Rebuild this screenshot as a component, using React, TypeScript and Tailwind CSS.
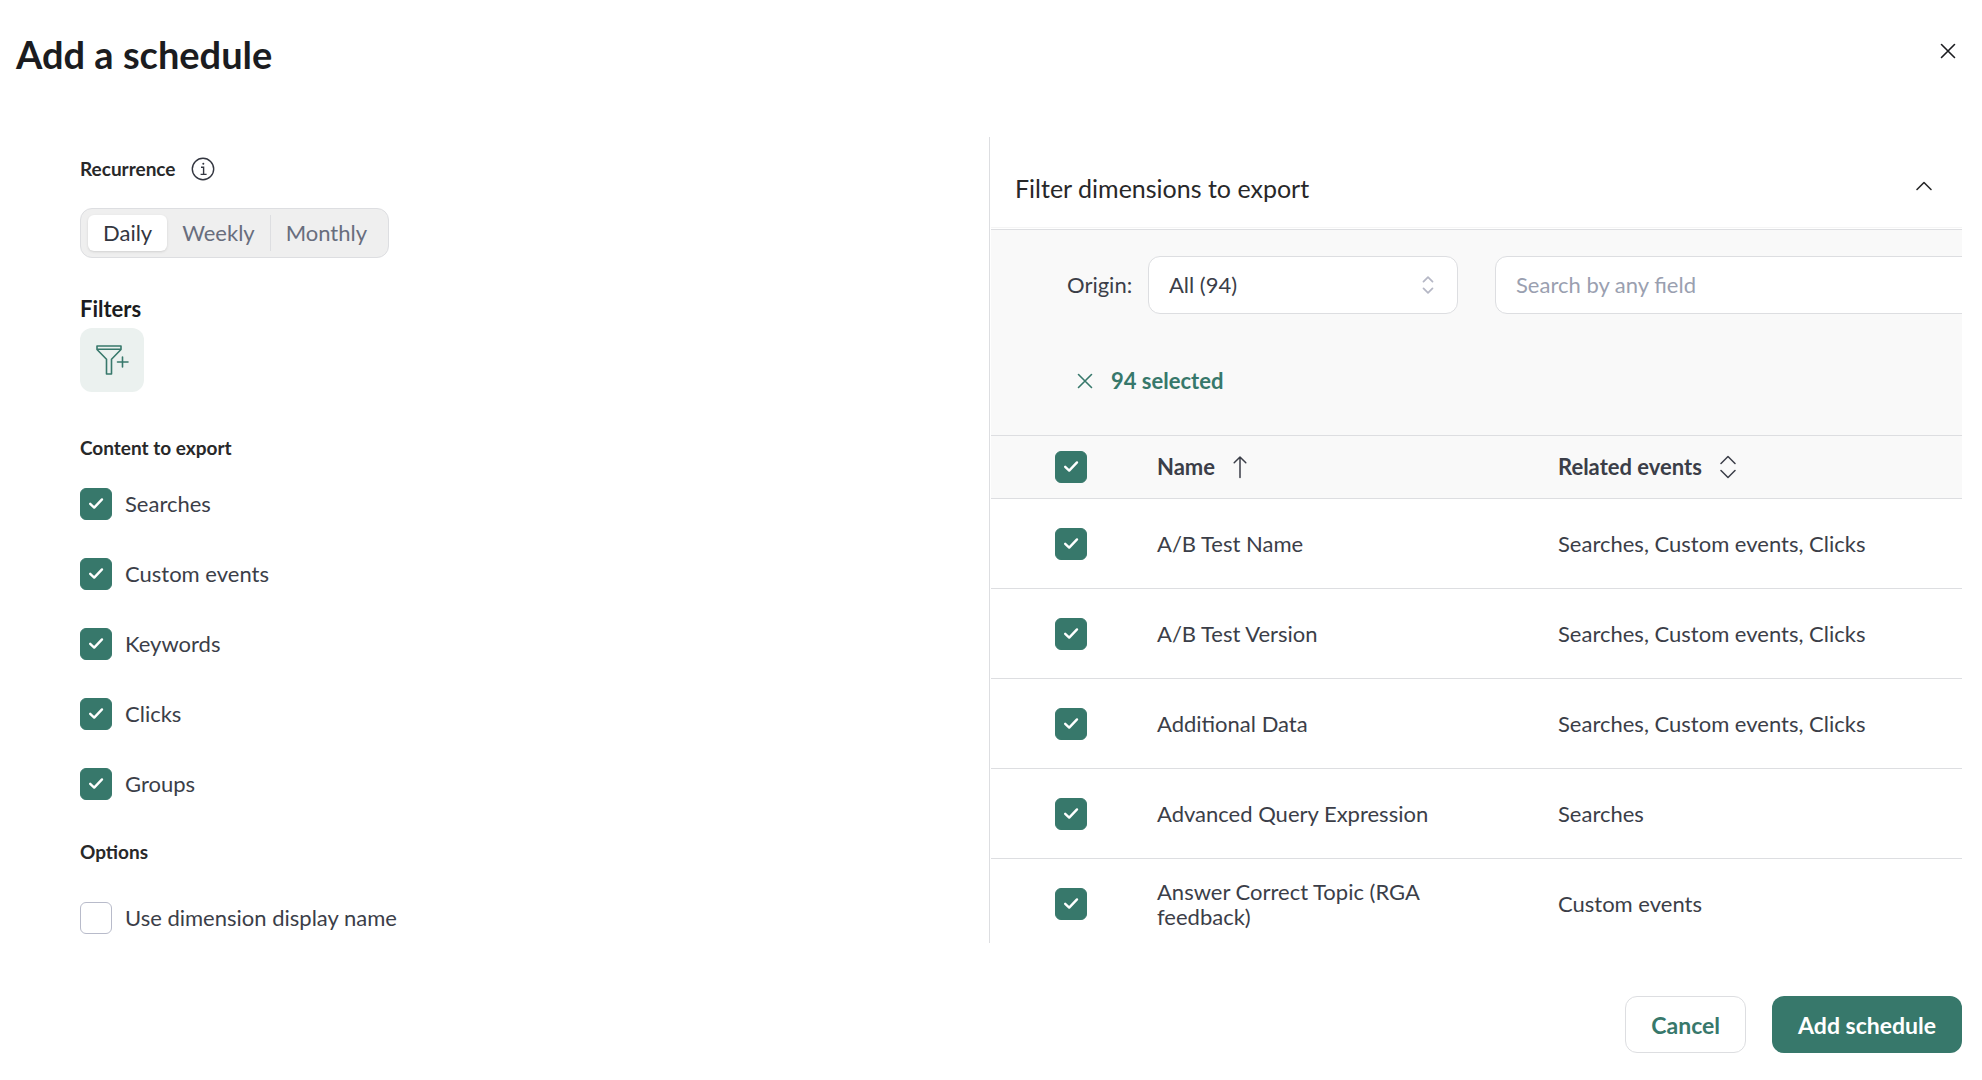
import { useState } from "react";
import type { ReactNode } from "react";

interface CheckboxProps {
  id: string;
  label?: string;
  defaultChecked?: boolean;
  children?: ReactNode;
}

function Checkbox({ id, label, defaultChecked = true, children }: CheckboxProps) {
  return (
    <div className="flex items-center gap-[13px]">
      <span className="grid size-8 shrink-0">
        <input
          id={id}
          type="checkbox"
          aria-label={label}
          defaultChecked={defaultChecked}
          className="peer col-start-1 row-start-1 size-8 appearance-none rounded-md border border-[#b8bbca] bg-white checked:border-[#37786b] checked:bg-[#37786b]"
        />
        <svg
          viewBox="0 0 32 32"
          fill="none"
          className="pointer-events-none invisible col-start-1 row-start-1 size-8 peer-checked:visible"
        >
          <path
            d="M10.2 15.8l4 3.8L22 11.4"
            stroke="white"
            strokeWidth="2.4"
            strokeLinecap="round"
            strokeLinejoin="round"
          />
        </svg>
      </span>
      {children && <label htmlFor={id}>{children}</label>}
    </div>
  );
}

function CloseIcon({ className }: { className: string }) {
  return (
    <svg viewBox="0 0 16 16" fill="none" className={className}>
      <path d="M1.5 1.5l13 13M14.5 1.5l-13 13" stroke="currentColor" strokeWidth="1.6" strokeLinecap="round" />
    </svg>
  );
}

const periods = ["Daily", "Weekly", "Monthly"];

const contents = ["Searches", "Custom events", "Keywords", "Clicks", "Groups"];

const dimensions = [
  { name: "A/B Test Name", events: "Searches, Custom events, Clicks" },
  { name: "A/B Test Version", events: "Searches, Custom events, Clicks" },
  { name: "Additional Data", events: "Searches, Custom events, Clicks" },
  { name: "Advanced Query Expression", events: "Searches" },
  { name: "Answer Correct Topic (RGA feedback)", events: "Custom events" },
];

function ScheduleSettings() {
  const [period, setPeriod] = useState("Daily");

  return (
    <section className="w-1/2 pl-16">
      <div className="mt-5 flex h-6 items-center gap-[15px]">
        <h2 className="text-[19px] font-bold text-[#282829]">Recurrence</h2>
        <button type="button" aria-label="About recurrence">
          <svg viewBox="0 0 24 24" fill="none" className="size-6 text-[#333640]">
            <circle cx="12" cy="12" r="10.7" stroke="currentColor" strokeWidth="1.4" />
            <path d="M10 10.3h2.6v7M9.6 17.4h6" stroke="currentColor" strokeWidth="1.4" />
            <circle cx="12.3" cy="6.8" r="1" fill="currentColor" />
          </svg>
        </button>
      </div>

      <div className="mt-[27px] inline-flex h-[50px] items-center rounded-xl border border-[#dddee1] bg-[#efefef] pl-[7px] pr-1.5">
        {periods.map((item, index) => (
          <button
            key={item}
            type="button"
            aria-pressed={item === period}
            onClick={() => setPeriod(item)}
            className={
              item === period
                ? "h-9 rounded-md bg-white px-[15px] text-[#333640] shadow"
                : index === 2
                  ? "h-9 border-l border-[#dddee1] px-[15px] text-[#686d7d]"
                  : "h-9 px-[15px] text-[#686d7d]"
            }
          >
            {item}
          </button>
        ))}
      </div>

      <h2 className="mt-9 font-bold leading-[30px] text-[#1b1c20]">Filters</h2>
      <button
        type="button"
        aria-label="Add filter"
        className="mt-1 flex size-16 items-center justify-center rounded-xl bg-[#ebf1ef] text-[#37786b]"
      >
        <svg viewBox="0 0 34 32" fill="none" stroke="currentColor" strokeWidth="1.6" strokeLinejoin="round" className="h-8 w-[34px]">
          <path d="M2 2h24v3.5l-9.5 9.8V30h-5V15.3L2 5.5zM2 5.3h24" />
          <path d="M27.5 13v10M22.5 18h10.500" strokeLinecap="round" />
        </svg>
      </button>

      <h2 className="mt-11 text-[19px] font-bold leading-6 text-[#282829]">Content to export</h2>
      <div className="mt-7 flex flex-col gap-[38px]">
        {contents.map((item) => (
          <Checkbox key={item} id={item}>
            {item}
          </Checkbox>
        ))}
      </div>

      <h2 className="mt-10 text-[19px] font-bold leading-6 text-[#282829]">Options</h2>
      <div className="mt-[38px]">
        <Checkbox id="display-name" defaultChecked={false}>
          Use dimension display name
        </Checkbox>
      </div>
    </section>
  );
}

function DimensionsPanel() {
  return (
    <section className="w-1/2 overflow-hidden border-l border-[#dddee1] pl-px">
      <div className="flex h-[91px] items-center justify-between border-b border-[#f5f5f5] pl-6 pr-[29px] pt-3">
        <h2 className="text-[25px] text-[#282829]">Filter dimensions to export</h2>
        <button type="button" aria-label="Collapse" className="pb-1">
          <svg viewBox="0 0 18 12" fill="none" className="h-3 w-[18px] text-[#282829]">
            <path d="M2 9.5l7-7 7 7" stroke="currentColor" strokeWidth="1.6" strokeLinecap="round" strokeLinejoin="round" />
          </svg>
        </button>
      </div>

      <div className="mt-px border-t border-[#dddee1] bg-[#f9f9f9] pb-[39px] pl-[76px]">
        <div className="flex items-center pt-[26px]">
          <label htmlFor="origin" className="w-[81px] shrink-0">
            Origin:
          </label>
          <div className="grid w-[310px] shrink-0 items-center">
            <select
              id="origin"
              className="col-start-1 row-start-1 h-[58px] appearance-none rounded-xl border border-[#dddee1] bg-white px-5"
            >
              <option>All (94)</option>
            </select>
            <svg
              viewBox="0 0 12 18"
              fill="none"
              className="pointer-events-none col-start-1 row-start-1 mr-6 h-[18px] w-3 justify-self-end text-[#b5b7c5]"
            >
              <path
                d="M1.5 5.7L6 1.2l4.5 4.5M1.5 12.3L6 16.8l4.5-4.5"
                stroke="currentColor"
                strokeWidth="1.7"
                strokeLinecap="round"
                strokeLinejoin="round"
              />
            </svg>
          </div>
          <input
            type="text"
            aria-label="Search"
            placeholder="Search by any field"
            className="ml-[37px] h-[58px] w-[560px] shrink-0 rounded-xl border border-[#dddee1] bg-white px-5 pb-0.5 placeholder:text-[#9a9fb0]"
          />
        </div>
        <button type="button" className="ml-2.5 mt-[52px] flex h-[30px] items-center gap-[18px] font-bold text-[#37786b]">
          <CloseIcon className="size-4" />
          94 selected
        </button>
      </div>

      <table className="w-full table-fixed border-collapse text-left">
        <thead>
          <tr className="h-[63px] border-y border-[#dddee1] bg-[#f9f9f9]">
            <th className="w-[166px] pl-16">
              <Checkbox id="select-all" label="Select all" />
            </th>
            <th className="w-[401px]">
              <button type="button" className="flex items-center gap-[18px] font-bold">
                Name
                <svg viewBox="0 0 14 24" fill="none" className="h-6 w-3.5">
                  <path
                    d="M7 22.5V2M1.2 7.8L7 2l5.8 5.8"
                    stroke="currentColor"
                    strokeWidth="1.5"
                    strokeLinecap="round"
                    strokeLinejoin="round"
                  />
                </svg>
              </button>
            </th>
            <th>
              <button type="button" className="flex items-center gap-[18px] font-bold">
                Related events
                <svg viewBox="0 0 16 24" fill="none" className="h-6 w-4">
                  <path
                    d="M1 8.5l7-7 7 7M1 15.5l7 7 7-7"
                    stroke="currentColor"
                    strokeWidth="1.5"
                    strokeLinecap="round"
                    strokeLinejoin="round"
                  />
                </svg>
              </button>
            </th>
          </tr>
        </thead>
        <tbody>
          {dimensions.map((dimension) => (
            <tr key={dimension.name} className="h-[90px] border-b border-[#dddee1]">
              <td className="pl-16">
                <Checkbox id={dimension.name} label={dimension.name} />
              </td>
              <td className="pr-[100px] leading-[25px]">{dimension.name}</td>
              <td>{dimension.events}</td>
            </tr>
          ))}
        </tbody>
      </table>
    </section>
  );
}

export default function App() {
  return (
    <main className="flex h-screen flex-col bg-white pl-4 pr-5 font-['Lato','Liberation_Sans',sans-serif] text-[22px] leading-[30px] text-[#3b3e48]">
      <header className="flex h-[137px] shrink-0 items-start justify-between pr-1.5">
        <h1 className="mt-8 text-[38px] font-bold leading-[44px] text-[#1b1c20]">Add a schedule</h1>
        <button type="button" aria-label="Close" className="mt-[43px] text-[#1b1c20]">
          <CloseIcon className="size-4" />
        </button>
      </header>

      <div className="flex min-h-0 flex-1 overflow-hidden">
        <ScheduleSettings />
        <DimensionsPanel />
      </div>

      <footer className="flex shrink-0 justify-end gap-[26px] pb-[27px] pt-[53px] text-[23px] font-bold">
        <button type="button" className="h-[57px] rounded-xl border border-[#dddee1] px-[25px] text-[#37786b]">
          Cancel
        </button>
        <button type="button" className="h-[57px] rounded-xl bg-[#37786b] px-[26px] text-white">
          Add schedule
        </button>
      </footer>
    </main>
  );
}
